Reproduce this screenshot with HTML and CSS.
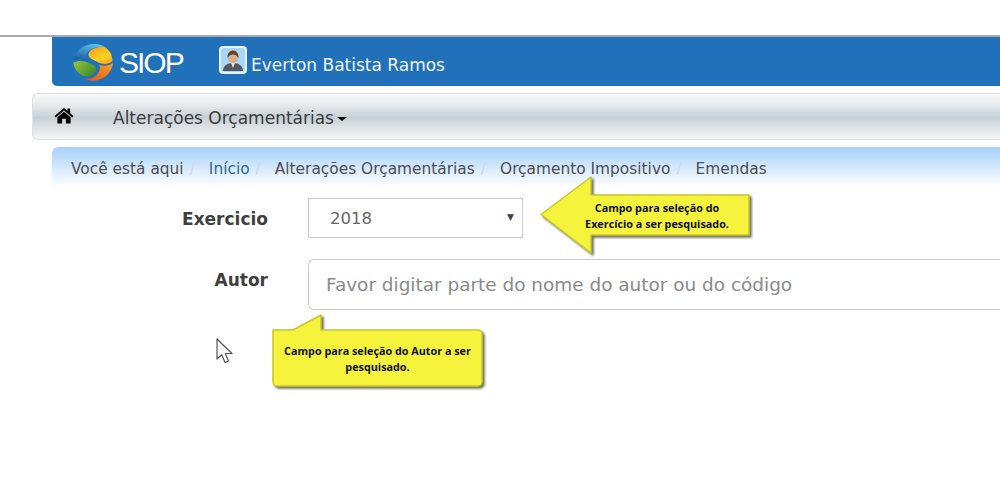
FILE: index.html
```html
<!DOCTYPE html>
<html lang="en">
<head>
  <meta charset="UTF-8">
  <meta name="viewport" content="width=device-width, initial-scale=1.0">
  <title>SIOP</title>
  <link rel="stylesheet" href="styles.css">
</head>
<body>
  <div class="page">
    <header class="topbar">
      <div class="logo">
        <svg class="logo-mark" width="50" height="48" viewBox="0 0 150 144">
          <defs>
            <linearGradient id="logoBlue" x1="0.7" y1="0" x2="0.2" y2="1">
              <stop offset="0" stop-color="#5cc3ee"/>
              <stop offset="1" stop-color="#14569f"/>
            </linearGradient>
            <linearGradient id="logoYellow" x1="0.2" y1="0" x2="0.8" y2="1">
              <stop offset="0" stop-color="#fb9b1c"/>
              <stop offset="0.6" stop-color="#fdd21e"/>
              <stop offset="1" stop-color="#f7a51d"/>
            </linearGradient>
            <linearGradient id="logoGreen" x1="0" y1="0" x2="1" y2="0.6">
              <stop offset="0" stop-color="#9cc73c"/>
              <stop offset="1" stop-color="#3f8d2f"/>
            </linearGradient>
            <linearGradient id="logoRed" x1="1" y1="0" x2="0" y2="1">
              <stop offset="0" stop-color="#f9a41e"/>
              <stop offset="1" stop-color="#e2501e"/>
            </linearGradient>
          </defs>
          <path d="M18 68C20 40 45 18 80 18 95 18 105 22 112 28 85 24 62 32 55 50 52 62 55 68 60 72 45 62 30 60 18 68z" fill="url(#logoBlue)"/>
          <path d="M112 28C125 38 135 55 133 70 120 82 100 80 85 70 70 62 58 58 62 45 68 32 90 24 112 28z" fill="url(#logoYellow)"/>
          <path d="M16 74C30 66 50 68 65 76 78 82 90 88 85 98 80 110 62 116 50 115 32 108 18 94 16 74z" fill="url(#logoGreen)"/>
          <path d="M135 76C133 100 110 128 75 128 65 128 58 126 52 122 75 124 90 112 95 95 97 85 95 82 92 80 105 85 122 84 135 76z" fill="url(#logoRed)"/>
        </svg>
        <span class="logo-text">SIOP</span>
      </div>
      <div class="avatar">
        <svg width="28" height="28" viewBox="0 0 28 28">
          <rect width="28" height="28" rx="4" fill="#e4f2fd"/>
          <rect x="2" y="2" width="24" height="24" rx="3" fill="#a9d6f9"/>
          <path d="M4 25c0-5 4-8 10-8s10 3 10 8z" fill="#55595d"/>
          <circle cx="14" cy="12" r="5" fill="#dcae88"/>
          <path d="M8.500 12c-.5-5 2.500-7.500 5.500-7.500s6 2.500 5.500 7.500c-1.500-2.500-3.500-3.500-5.500-3.500s-4 1-5.500 3.500z" fill="#6b4325"/>
          <path d="M12 17h4l-2 5z" fill="#e6e6e6"/>
        </svg>
      </div>
      <span class="username">Everton Batista Ramos</span>
    </header>

    <nav class="menu">
      <svg class="home" width="20" height="17" viewBox="0 0 20 18">
        <path d="M10 1 0 9.500l1.200 1.500L10 3.700l8.800 7.300 1.200-1.500-3.500-3V1.500h-2.800v2.600z" fill="#000"/>
        <path d="M10 5 3 10.800V17.500h5v-5h4v5h5v-6.700z" fill="#000"/>
      </svg>
      <span class="menu-item">Alterações Orçamentárias<span class="caret"></span></span>
    </nav>

    <ol class="crumbs">
      <li>Você está aqui</li>
      <li class="link">Início</li>
      <li>Alterações Orçamentárias</li>
      <li>Orçamento Impositivo</li>
      <li class="last">Emendas</li>
    </ol>

    <form class="form">
      <label class="label label-year">Exercicio</label>
      <div class="select">2018<span class="select-arrow">▼</span></div>
      <label class="label label-author">Autor</label>
      <div class="input">Favor digitar parte do nome do autor ou do código</div>
    </form>
  </div>

  <svg class="callout-shape arrow-shape" width="222" height="88" viewBox="0 0 222 88">
    <path d="M2 39.500 52 2V20H210V60H52V78z" fill="#f5f33c" stroke="#c9c62e" stroke-width="1.500" stroke-linejoin="round" class="shadowed"/>
  </svg>
  <div class="callout-text arrow-text">Campo para seleção do<br>Exercício a ser pesquisado.</div>

  <svg class="callout-shape balloon-shape" width="216" height="78" viewBox="0 0 216 78">
    <path d="M3 17H23L51 2V17H208a4 4 0 0 1 4 4V69a4 4 0 0 1-4 4H7a4 4 0 0 1-4-4V17z" fill="#f5f33c" stroke="#c9c62e" stroke-width="1.500" stroke-linejoin="round" class="shadowed"/>
  </svg>
  <div class="callout-text balloon-text">Campo para seleção do Autor a ser<br>pesquisado.</div>

  <svg class="cursor" width="18" height="27" viewBox="0 0 18 27">
    <path d="M1 1V21L5.800 16.800 9 24.500 12.500 23 9.300 15.500H16z" fill="#fff" stroke="#555" stroke-width="1.200" stroke-linejoin="round"/>
  </svg>
</body>
</html>
```
FILE: styles.css
```css
html, body {
  margin: 0;
  padding: 0;
  background: #fff;
  overflow: hidden;
}
body {
  font-family: "DejaVu Sans", sans-serif;
  color: #555;
  height: 494px;
  position: relative;
}
.page {
  padding-top: 35px;
}
.topbar {
  border-top: 2px solid #a9adb0;
  padding-left: 52px;
  display: flex;
  align-items: center;
  height: 49px;
  position: relative;
  color: #fff;
}
.topbar::before {
  content: "";
  position: absolute;
  left: 52px;
  right: 0;
  top: 0;
  bottom: 0;
  background: #2071b9;
  border-radius: 0 0 0 5px;
}
.logo, .avatar, .username {
  position: relative;
}
.logo {
  display: flex;
  align-items: center;
  margin-left: 16px;
  width: 151px;
}
.logo-text {
  font-family: "Liberation Sans", sans-serif;
  font-size: 30px;
  letter-spacing: -2px;
  margin-left: 1px;
  margin-top: 2px;
  font-weight: 400;
}
.avatar {
  height: 28px;
  margin-top: -3px;
}
.username {
  font-size: 17px;
  margin-left: 4px;
  margin-top: 6px;
  color: #eef4fa;
}
.menu {
  margin: 7px 0 7px 32px;
  height: 45px;
  display: flex;
  align-items: center;
  border: 1px solid #d9dfe3;
  border-right: 0;
  border-radius: 6px 0 0 6px;
  background: linear-gradient(#f8f9fa 0%, #e6eaed 25%, #c6d0d6 52%, #e3e7e9 80%, #f3f5f6 100%);
}
.home {
  margin-left: 21px;
  margin-top: -3px;
}
.menu-item {
  margin-left: 39px;
  padding-top: 2px;
  font-size: 17px;
  color: #3c3c3c;
}
.caret {
  display: inline-block;
  margin-left: 3px;
  vertical-align: middle;
  border-top: 4px solid #000;
  border-left: 5px solid transparent;
  border-right: 5px solid transparent;
}
.crumbs {
  list-style: none;
  margin: 0 0 0 52px;
  padding: 4px 0 0 19px;
  box-sizing: border-box;
  height: 40px;
  display: flex;
  align-items: center;
  font-size: 15.400px;
  color: #4e4e4e;
  background: linear-gradient(#a6d1fb, #fff);
  border-radius: 6px 0 0 0;
}
.crumbs li::after {
  content: "/";
  color: #d3d9df;
  padding: 0 14px 0 6px;
}
.crumbs .last::after {
  content: "";
}
.crumbs .link {
  color: #2c6a93;
}
.form {
  display: grid;
  grid-template-columns: 268px 692px;
  grid-template-rows: 40px 51px;
  column-gap: 40px;
  row-gap: 21px;
  margin-top: 11px;
}
.label {
  font-weight: 700;
  font-size: 17px;
  color: #3f3f3f;
  text-align: right;
}
.label-year {
  line-height: 43px;
}
.label-author {
  line-height: 42px;
}
.select {
  width: 215px;
  box-sizing: border-box;
  height: 40px;
  line-height: 39px;
  border: 1px solid #ccc;
  padding-left: 21px;
  font-size: 16.500px;
  color: #666;
  position: relative;
}
.select-arrow {
  position: absolute;
  right: 8px;
  top: -1px;
  font-size: 9px;
  color: #444;
}
.input {
  box-sizing: border-box;
  height: 51px;
  line-height: 50px;
  border: 1px solid #ccc;
  border-right: 0;
  border-radius: 6px 0 0 6px;
  padding-left: 17px;
  font-size: 18.450px;
  color: #8a8a8a;
}
.callout-shape {
  position: absolute;
  overflow: visible;
}
.shadowed {
  filter: drop-shadow(2px 2px 1px rgba(50, 50, 20, 0.7));
}
.arrow-shape {
  left: 539px;
  top: 175px;
}
.balloon-shape {
  left: 270px;
  top: 313px;
}
.callout-text {
  position: absolute;
  font-family: "Open Sans", sans-serif;
  font-weight: 700;
  font-size: 10.800px;
  line-height: 16px;
  text-align: center;
  color: #111;
}
.arrow-text {
  left: 577px;
  width: 160px;
  top: 200px;
}
.balloon-text {
  left: 275px;
  width: 205px;
  top: 343px;
}
.cursor {
  position: absolute;
  left: 216px;
  top: 338px;
}
```
